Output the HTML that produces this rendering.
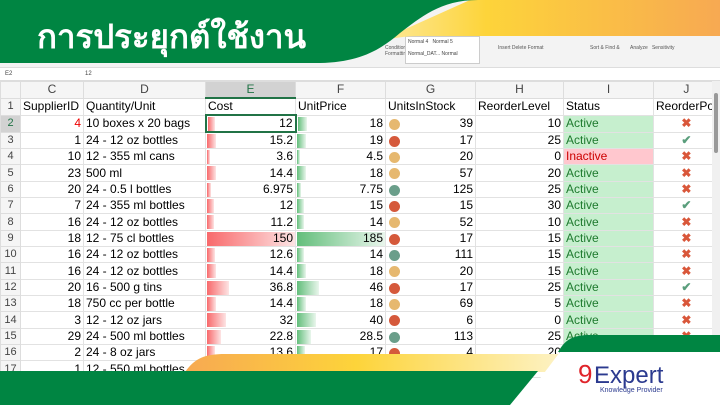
<!DOCTYPE html>
<html><head><meta charset="utf-8"><style>
*{margin:0;padding:0;box-sizing:border-box}
body{width:720px;height:405px;overflow:hidden;background:#fff;font-family:"Liberation Sans",sans-serif;position:relative}
.rib{position:absolute;left:0;top:0;width:720px;height:68px;background:#f3f3f3;border-bottom:1px solid #ddd}
.fb{position:absolute;left:0;top:68px;width:720px;height:13px;background:#fff;border-bottom:1px solid #ddd;font-size:6px;color:#444}
table{position:absolute;left:0;top:81px;border-collapse:collapse;table-layout:fixed;font-size:12px}
td{height:16.35px;border:1px solid #e2e2e2;padding:0 2px;white-space:nowrap;overflow:hidden;position:relative;line-height:15px}
tr.h td{height:16px;background:#f5f5f5;text-align:center;color:#444;font-size:12px;border-color:#ddd}
td.n{background:#f5f5f5;text-align:center;color:#444;font-size:11px;border-color:#ddd}
.r{text-align:right}
.b{position:absolute;left:1px;top:1px;height:14px}
.be{background:linear-gradient(90deg,#f8696b,#fde4e4)}
.bf{background:linear-gradient(90deg,#63be7b,#e9f6ec)}
td span{position:relative}
.d{display:inline-block;width:11px;height:11px;border-radius:50%;position:absolute;left:3px;top:3px}
.am{background:#e6b86f}.rd{background:#d5593b}.tl{background:#6a9e8a}
.ac{background:#c6efce;color:#1e7a2e}
.x{color:#d9573a;text-align:center;font-weight:bold}
.v{color:#5a9e7c;text-align:center;font-weight:bold}
</style></head><body>
<div class="rib">
<div style="position:absolute;left:385px;top:45px;font-size:5px;color:#555;line-height:6px">Conditional<br>Formatting</div>
<div style="position:absolute;left:410px;top:45px;font-size:5px;color:#555;line-height:6px">Format as<br>Table</div>
<div style="position:absolute;left:405px;top:36px;width:75px;height:28px;background:#fff;border:1px solid #ccc;font-size:5px;color:#444;padding:2px">Normal 4 &nbsp; Normal 5<br><br>Normal_DAT... Normal</div>
<div style="position:absolute;left:498px;top:45px;font-size:5px;color:#555">Insert Delete Format</div>
<div style="position:absolute;left:590px;top:45px;font-size:5px;color:#555">Sort &amp; Find &amp;</div>
<div style="position:absolute;left:630px;top:45px;font-size:5px;color:#555">Analyze &nbsp; Sensitivity</div>
</div>
<div class="fb"><span style="position:absolute;left:5px;top:3px">E2</span><span style="position:absolute;left:85px;top:3px">12</span></div>
<svg width="720" height="70" style="position:absolute;left:0;top:0">
<defs><linearGradient id="o" x1="0" x2="1"><stop offset="0" stop-color="#fdf3c8"/><stop offset="0.4" stop-color="#fdd43a"/><stop offset="1" stop-color="#f7a952"/></linearGradient></defs>
<path d="M330,63 C360,50 380,36 420,36 H720 V0 H470 Z" fill="url(#o)"/>
<path d="M0,0 H478 C440,0 420,18 400,33 C380,50 360,62 320,63 H0 Z" fill="#008542"/>
<text x="37" y="48" font-size="33" font-weight="bold" fill="#fff" font-family="Liberation Sans, sans-serif">การประยุกต์ใช้งาน</text>
</svg>
<table>
<colgroup><col style="width:20px"><col style="width:63px"><col style="width:122px"><col style="width:90px"><col style="width:90px"><col style="width:90px"><col style="width:88px"><col style="width:90px"><col style="width:59px"></colgroup>
<tr class="h"><td></td><td>C</td><td>D</td><td style="background:#d2d2d2;color:#217346;border-bottom:2px solid #217346">E</td><td>F</td><td>G</td><td>H</td><td>I</td><td>J</td></tr>
<tr><td class="n">1</td><td>SupplierID</td><td>Quantity/Unit</td><td>Cost</td><td>UnitPrice</td><td>UnitsInStock</td><td>ReorderLevel</td><td>Status</td><td>ReorderPoi</td></tr>
<tr><td class="n" style="color:#217346;background:#d2d2d2">2</td><td class="r" style="color:#e00">4</td><td>10 boxes x 20 bags</td><td class="r" style="border:2px solid #217346"><div class="b be" style="width:7px"></div><span>12</span></td><td class="r"><div class="b bf" style="width:9px"></div><span>18</span></td><td class="r"><i class="d am"></i>39</td><td class="r">10</td><td class="ac">Active</td><td class="x">✖</td></tr>
<tr><td class="n">3</td><td class="r">1</td><td>24 - 12 oz bottles</td><td class="r"><div class="b be" style="width:9px"></div><span>15.2</span></td><td class="r"><div class="b bf" style="width:9px"></div><span>19</span></td><td class="r"><i class="d rd"></i>17</td><td class="r">25</td><td class="ac">Active</td><td class="v">✔</td></tr>
<tr><td class="n">4</td><td class="r">10</td><td>12 - 355 ml cans</td><td class="r"><div class="b be" style="width:3px"></div><span>3.6</span></td><td class="r"><div class="b bf" style="width:3px"></div><span>4.5</span></td><td class="r"><i class="d am"></i>20</td><td class="r">0</td><td style="background:#ffc7ce;color:#c00">Inactive</td><td class="x">✖</td></tr>
<tr><td class="n">5</td><td class="r">23</td><td>500 ml</td><td class="r"><div class="b be" style="width:9px"></div><span>14.4</span></td><td class="r"><div class="b bf" style="width:9px"></div><span>18</span></td><td class="r"><i class="d am"></i>57</td><td class="r">20</td><td class="ac">Active</td><td class="x">✖</td></tr>
<tr><td class="n">6</td><td class="r">20</td><td>24 - 0.5 l bottles</td><td class="r"><div class="b be" style="width:4px"></div><span>6.975</span></td><td class="r"><div class="b bf" style="width:4px"></div><span>7.75</span></td><td class="r"><i class="d tl"></i>125</td><td class="r">25</td><td class="ac">Active</td><td class="x">✖</td></tr>
<tr><td class="n">7</td><td class="r">7</td><td>24 - 355 ml bottles</td><td class="r"><div class="b be" style="width:7px"></div><span>12</span></td><td class="r"><div class="b bf" style="width:7px"></div><span>15</span></td><td class="r"><i class="d rd"></i>15</td><td class="r">30</td><td class="ac">Active</td><td class="v">✔</td></tr>
<tr><td class="n">8</td><td class="r">16</td><td>24 - 12 oz bottles</td><td class="r"><div class="b be" style="width:7px"></div><span>11.2</span></td><td class="r"><div class="b bf" style="width:7px"></div><span>14</span></td><td class="r"><i class="d am"></i>52</td><td class="r">10</td><td class="ac">Active</td><td class="x">✖</td></tr>
<tr><td class="n">9</td><td class="r">18</td><td>12 - 75 cl bottles</td><td class="r"><div class="b be" style="width:88px"></div><span>150</span></td><td class="r"><div class="b bf" style="width:88px"></div><span>185</span></td><td class="r"><i class="d rd"></i>17</td><td class="r">15</td><td class="ac">Active</td><td class="x">✖</td></tr>
<tr><td class="n">10</td><td class="r">16</td><td>24 - 12 oz bottles</td><td class="r"><div class="b be" style="width:8px"></div><span>12.6</span></td><td class="r"><div class="b bf" style="width:7px"></div><span>14</span></td><td class="r"><i class="d tl"></i>111</td><td class="r">15</td><td class="ac">Active</td><td class="x">✖</td></tr>
<tr><td class="n">11</td><td class="r">16</td><td>24 - 12 oz bottles</td><td class="r"><div class="b be" style="width:9px"></div><span>14.4</span></td><td class="r"><div class="b bf" style="width:9px"></div><span>18</span></td><td class="r"><i class="d am"></i>20</td><td class="r">15</td><td class="ac">Active</td><td class="x">✖</td></tr>
<tr><td class="n">12</td><td class="r">20</td><td>16 - 500 g tins</td><td class="r"><div class="b be" style="width:22px"></div><span>36.8</span></td><td class="r"><div class="b bf" style="width:22px"></div><span>46</span></td><td class="r"><i class="d rd"></i>17</td><td class="r">25</td><td class="ac">Active</td><td class="v">✔</td></tr>
<tr><td class="n">13</td><td class="r">18</td><td>750 cc per bottle</td><td class="r"><div class="b be" style="width:9px"></div><span>14.4</span></td><td class="r"><div class="b bf" style="width:9px"></div><span>18</span></td><td class="r"><i class="d am"></i>69</td><td class="r">5</td><td class="ac">Active</td><td class="x">✖</td></tr>
<tr><td class="n">14</td><td class="r">3</td><td>12 - 12 oz jars</td><td class="r"><div class="b be" style="width:19px"></div><span>32</span></td><td class="r"><div class="b bf" style="width:19px"></div><span>40</span></td><td class="r"><i class="d rd"></i>6</td><td class="r">0</td><td class="ac">Active</td><td class="x">✖</td></tr>
<tr><td class="n">15</td><td class="r">29</td><td>24 - 500 ml bottles</td><td class="r"><div class="b be" style="width:14px"></div><span>22.8</span></td><td class="r"><div class="b bf" style="width:14px"></div><span>28.5</span></td><td class="r"><i class="d tl"></i>113</td><td class="r">25</td><td class="ac">Active</td><td class="x">✖</td></tr>
<tr><td class="n">16</td><td class="r">2</td><td>24 - 8 oz jars</td><td class="r"><div class="b be" style="width:8px"></div><span>13.6</span></td><td class="r"><div class="b bf" style="width:8px"></div><span>17</span></td><td class="r"><i class="d rd"></i>4</td><td class="r">20</td><td class="ac">Active</td><td class="x">✖</td></tr>
<tr><td class="n">17</td><td class="r">1</td><td>12 - 550 ml bottles</td><td></td><td></td><td></td><td></td><td></td><td></td></tr>
</table>
<div style="position:absolute;left:712px;top:81px;width:8px;height:290px;background:#f0f0f0"><div style="position:absolute;left:2px;top:12px;width:4px;height:60px;background:#999;border-radius:2px"></div></div>
<svg width="720" height="405" style="position:absolute;left:0;top:0">
<defs><linearGradient id="o2" x1="0" x2="1"><stop offset="0" stop-color="#f7a952"/><stop offset="0.45" stop-color="#fdd43a"/><stop offset="1" stop-color="#fdf3c8"/></linearGradient></defs>
<path d="M185,372 C195,358 205,354 225,354 H566 L552,372 Z" fill="url(#o2)"/>
<path d="M520,405 L560,352 H720 V405 Z" fill="#fff"/>
<path d="M0,371 H538 L510,405 H0 Z" fill="#008542"/>
<path d="M558,352 C565,340 572,335 590,335 H720 V352 Z" fill="#008542"/>
<text x="578" y="383" font-size="26" fill="#e0242a" font-family="Liberation Sans, sans-serif">9</text>
<text x="594" y="383" font-size="24" fill="#2b3a8f" font-family="Liberation Sans, sans-serif">Expert</text>
<text x="600" y="392" font-size="7" fill="#2b3a8f" font-family="Liberation Sans, sans-serif">Knowledge Provider</text>
</svg>
</body></html>
